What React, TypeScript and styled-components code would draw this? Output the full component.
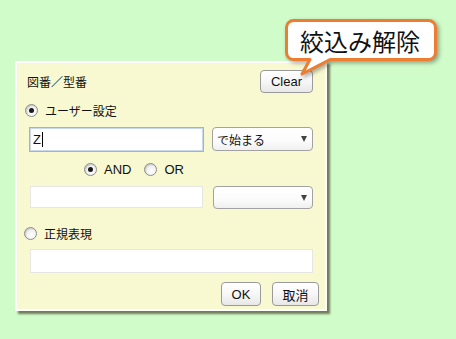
import React from "react";
import styled, { createGlobalStyle } from "styled-components";

const Global = createGlobalStyle`
  html, body { margin: 0; padding: 0; background: #d0fcc9; }
  body { font-family: "Noto Sans CJK JP", "Liberation Sans", sans-serif; }
  * { box-sizing: border-box; }
`;

const JP = `"Noto Sans CJK JP", "Liberation Sans", sans-serif`;
const LAT = `"Liberation Sans", "Noto Sans CJK JP", sans-serif`;

const Page = styled.div`
  position: relative;
  width: 456px;
  height: 339px;
  padding: 61px 0 0 15px;
  background: #d0fcc9;
  overflow: hidden;
`;

const Panel = styled.div`
  width: 312px;
  height: 250px;
  border: 2px solid #ffffff;
  background: #f8f8d1;
  box-shadow: 3px 3px 2px rgba(90, 90, 60, 0.8);
  display: flex;
  flex-direction: column;
`;

const Header = styled.div`
  margin-top: 7px;
  height: 23px;
  padding: 0 12px 0 10px;
  display: flex;
  align-items: center;
  justify-content: space-between;
`;

const Title = styled.span`
  font-family: ${JP};
  font-size: 12px;
  color: #111;
`;

const Button = styled.div<{ $w: number; $h?: number; $jp?: boolean }>`
  width: ${(p) => p.$w}px;
  height: ${(p) => p.$h ?? 24}px;
  border: 1px solid #9a9a9a;
  border-radius: 4px;
  background: linear-gradient(#ffffff 0%, #f7f7f7 50%, #e8e8e8 100%);
  display: flex;
  align-items: center;
  justify-content: center;
  font-family: ${(p) => (p.$jp ? JP : LAT)};
  font-size: 13px;
  color: #111;
`;

const RadioRow = styled.div<{ $mt: number; $pl: number }>`
  margin-top: ${(p) => p.$mt}px;
  height: 16px;
  padding-left: ${(p) => p.$pl}px;
  display: flex;
  align-items: center;
`;

const RadioItem = styled.label<{ $gapAfter?: number }>`
  display: flex;
  align-items: center;
  gap: 7px;
  margin-right: ${(p) => p.$gapAfter ?? 0}px;
  font-family: ${JP};
  font-size: 12px;
  color: #111;
`;

const RadioLabelLatin = styled.span`
  font-family: ${LAT};
  font-size: 13px;
`;

const RadioCircle = styled.span<{ $on?: boolean }>`
  position: relative;
  width: 13px;
  height: 13px;
  border-radius: 50%;
  border: 1px solid #8c8c8c;
  background: radial-gradient(circle at 60% 65%, #ffffff 0%, #f2f2f2 45%, #d6d6d6 100%);
  box-shadow: inset 1px 1px 1px rgba(0, 0, 0, 0.12);
  &::after {
    content: "";
    display: ${(p) => (p.$on ? "block" : "none")};
    position: absolute;
    left: 3px;
    top: 3px;
    width: 5px;
    height: 5px;
    border-radius: 50%;
    background: #1a1a1a;
  }
`;

const FieldRow = styled.div<{ $mt: number; $pl: number; $gap?: number }>`
  margin-top: ${(p) => p.$mt}px;
  padding-left: ${(p) => p.$pl}px;
  display: flex;
  align-items: flex-start;
  gap: ${(p) => p.$gap ?? 8}px;
`;

const TextBox = styled.div<{ $w: number; $h: number; $focus?: boolean }>`
  width: ${(p) => p.$w}px;
  height: ${(p) => p.$h}px;
  background: #ffffff;
  border: 1px solid ${(p) => (p.$focus ? "#9ab6d6" : "#e6e6e2")};
  box-shadow: ${(p) => (p.$focus ? "inset 0 0 0 1px #c9d8ea" : "none")};
  display: flex;
  align-items: center;
  padding-left: 3px;
  font-family: ${LAT};
  font-size: 13px;
  color: #111;
`;

const Caret = styled.span`
  display: inline-block;
  width: 1px;
  height: 15px;
  background: #000;
  margin-left: 1px;
`;

const Select = styled.div<{ $w: number; $h: number }>`
  width: ${(p) => p.$w}px;
  height: ${(p) => p.$h}px;
  border: 1px solid #a2a2a2;
  border-radius: 4px;
  background: linear-gradient(#ffffff 0%, #fbfbfb 60%, #f0f0f0 100%);
  display: flex;
  align-items: center;
  justify-content: space-between;
  padding: 0 5px 0 4px;
  font-family: ${JP};
  font-size: 12px;
  color: #111;
`;

const Arrow = styled.span`
  width: 0;
  height: 0;
  border-left: 3.5px solid transparent;
  border-right: 3.5px solid transparent;
  border-top: 6px solid #444;
`;

const Footer = styled.div`
  margin-top: 9px;
  padding-right: 6px;
  display: flex;
  justify-content: flex-end;
  gap: 11px;
`;

const Callout = styled.div`
  position: absolute;
  left: 280px;
  top: 15px;
  width: 165px;
  height: 65px;
`;

const CalloutShape = styled.svg`
  position: absolute;
  left: 0;
  top: 0;
  filter: drop-shadow(2px 2px 2px rgba(0, 0, 0, 0.35));
`;

const CalloutText = styled.div`
  position: absolute;
  left: 6px;
  top: 4px;
  width: 150px;
  height: 42px;
  display: flex;
  align-items: center;
  padding-left: 14px;
  font-family: ${JP};
  font-size: 24px;
  color: #111;
`;

export default function App() {
  return (
    <>
      <Global />
      <Page>
        <Panel>
          <Header>
            <Title>図番／型番</Title>
            <Button $w={53} $h={23}>Clear</Button>
          </Header>

          <RadioRow $mt={9} $pl={8}>
            <RadioItem>
              <RadioCircle $on />
              ユーザー設定
            </RadioItem>
          </RadioRow>

          <FieldRow $mt={9} $pl={12} $gap={8}>
            <TextBox $w={175} $h={25} $focus>
              Z<Caret />
            </TextBox>
            <Select $w={101} $h={24}>
              で始まる
              <Arrow />
            </Select>
          </FieldRow>

          <RadioRow $mt={9} $pl={67}>
            <RadioItem $gapAfter={13}>
              <RadioCircle $on />
              <RadioLabelLatin>AND</RadioLabelLatin>
            </RadioItem>
            <RadioItem>
              <RadioCircle />
              <RadioLabelLatin>OR</RadioLabelLatin>
            </RadioItem>
          </RadioRow>

          <FieldRow $mt={9} $pl={13} $gap={10}>
            <TextBox $w={173} $h={22} />
            <Select $w={100} $h={23}>
              <span />
              <Arrow />
            </Select>
          </FieldRow>

          <RadioRow $mt={16} $pl={7}>
            <RadioItem>
              <RadioCircle />
              正規表現
            </RadioItem>
          </RadioRow>

          <FieldRow $mt={8} $pl={13}>
            <TextBox $w={283} $h={24} />
          </FieldRow>

          <Footer>
            <Button $w={40}>OK</Button>
            <Button $w={47} $jp>取消</Button>
          </Footer>
        </Panel>

        <Callout>
          <CalloutShape width="165" height="65" viewBox="0 0 165 65">
            <path
              d="M 13.5 5.5 H 148.5 A 7 7 0 0 1 155.5 12.5 V 37.5 A 7 7 0 0 1 148.5 44.5 H 50 L 22 59 L 30 44.5 H 13.5 A 7 7 0 0 1 6.5 37.5 V 12.5 A 7 7 0 0 1 13.5 5.5 Z"
              fill="#ffffff"
              stroke="#ed7d31"
              strokeWidth="3"
              strokeLinejoin="round"
            />
          </CalloutShape>
          <CalloutText>絞込み解除</CalloutText>
        </Callout>
      </Page>
    </>
  );
}
